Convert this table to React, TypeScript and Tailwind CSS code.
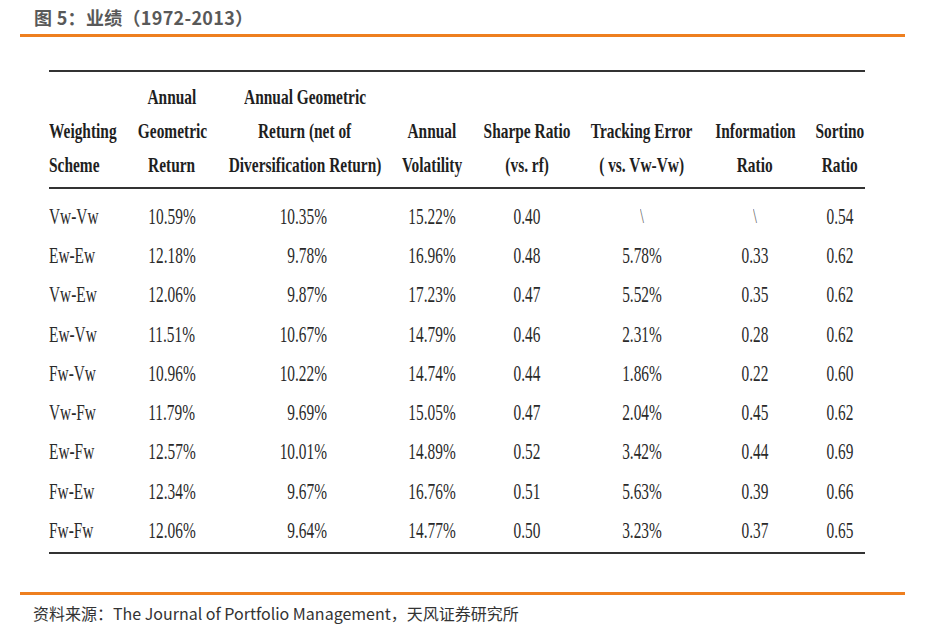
import React from "react";

const rows: string[][] = [
  ["Vw-Vw", "10.59%", "10.35%", "15.22%", "0.40", "\\", "\\", "0.54"],
  ["Ew-Ew", "12.18%", "9.78%", "16.96%", "0.48", "5.78%", "0.33", "0.62"],
  ["Vw-Ew", "12.06%", "9.87%", "17.23%", "0.47", "5.52%", "0.35", "0.62"],
  ["Ew-Vw", "11.51%", "10.67%", "14.79%", "0.46", "2.31%", "0.28", "0.62"],
  ["Fw-Vw", "10.96%", "10.22%", "14.74%", "0.44", "1.86%", "0.22", "0.60"],
  ["Vw-Fw", "11.79%", "9.69%", "15.05%", "0.47", "2.04%", "0.45", "0.62"],
  ["Ew-Fw", "12.57%", "10.01%", "14.89%", "0.52", "3.42%", "0.44", "0.69"],
  ["Fw-Ew", "12.34%", "9.67%", "16.76%", "0.51", "5.63%", "0.39", "0.66"],
  ["Fw-Fw", "12.06%", "9.64%", "14.77%", "0.50", "3.23%", "0.37", "0.65"],
];

const headers: string[][] = [
  ["Weighting", "Scheme"],
  ["Annual", "Geometric", "Return"],
  ["Annual Geometric", "Return (net of", "Diversification Return)"],
  ["Annual", "Volatility"],
  ["Sharpe Ratio", "(vs. rf)"],
  ["Tracking Error", "( vs. Vw-Vw)"],
  ["Information", "Ratio"],
  ["Sortino", "Ratio"],
];

const grid = "grid grid-cols-[84px_78px_188px_66px_124px_106px_120px_50px]";

function HeadCell({ lines, index }: { lines: string[]; index: number }) {
  const first = index === 0;
  return (
    <div
      className={`flex flex-col justify-end ${first ? "items-start" : "items-center"}`}
    >
      {lines.map((l) => (
        <div key={l} className="h-[34px] leading-[34px] whitespace-nowrap flex justify-center">
          <span
            className={`inline-block scale-x-[0.7] ${first ? "origin-left" : "origin-center"}`}
          >
            {l}
          </span>
        </div>
      ))}
    </div>
  );
}

function DataCell({ value, index }: { value: string; index: number }) {
  if (index === 0) {
    return (
      <div className="whitespace-nowrap">
        <span className="inline-block scale-x-[0.64] origin-left">{value}</span>
      </div>
    );
  }
  if (index === 2) {
    return (
      <div className="whitespace-nowrap flex justify-end pr-[72px]">
        <span className="inline-block scale-x-[0.64] origin-right">{value}</span>
      </div>
    );
  }
  return (
    <div className="whitespace-nowrap flex justify-center">
      <span
        className={`inline-block scale-x-[0.64] origin-center ${value === "\\" ? "text-[#666] text-[22px]" : ""}`}
      >
        {value}
      </span>
    </div>
  );
}

export default function App() {
  return (
    <div className="w-[925px] h-[644px] bg-white px-[20px] overflow-hidden">
      <div
        className="h-[34px] pl-[14px] flex items-center text-[18px] font-bold text-[#595959] tracking-[0.3px]"
        style={{ fontFamily: '"Noto Sans CJK SC", "Noto Sans", sans-serif' }}
      >
        图 5：业绩（1972-2013）
      </div>
      <div className="h-[3px] bg-[#ee7f1f]" />

      <div
        className="ml-[29px] mt-[33px] w-[816px] text-[#1f1f1f]"
        style={{ fontFamily: '"Liberation Serif", "Times New Roman", serif' }}
      >
        <div className="h-[2px] bg-[#333]" />
        <div className={`${grid} pt-[8px] pb-[5px] text-[22px] font-bold`}>
          {headers.map((h, i) => (
            <HeadCell key={i} lines={h} index={i} />
          ))}
        </div>
        <div className="h-[2px] bg-[#333]" />
        <div className="pt-[7px] pb-[2px] text-[24px] text-[#2a2a2a]">
          {rows.map((r) => (
            <div key={r[0]} className={`${grid} h-[39.3px] items-center`}>
              {r.map((v, i) => (
                <DataCell key={i} value={v} index={i} />
              ))}
            </div>
          ))}
        </div>
        <div className="h-[2px] bg-[#333]" />
      </div>

      <div className="mt-[38px] h-[3px] bg-[#ee7f1f]" />
      <div
        className="pl-[13px] pt-[6px] text-[16px] text-[#333]"
        style={{ fontFamily: '"Noto Sans CJK SC", "Noto Sans", sans-serif' }}
      >
        资料来源：The Journal of Portfolio Management，天风证券研究所
      </div>
    </div>
  );
}
